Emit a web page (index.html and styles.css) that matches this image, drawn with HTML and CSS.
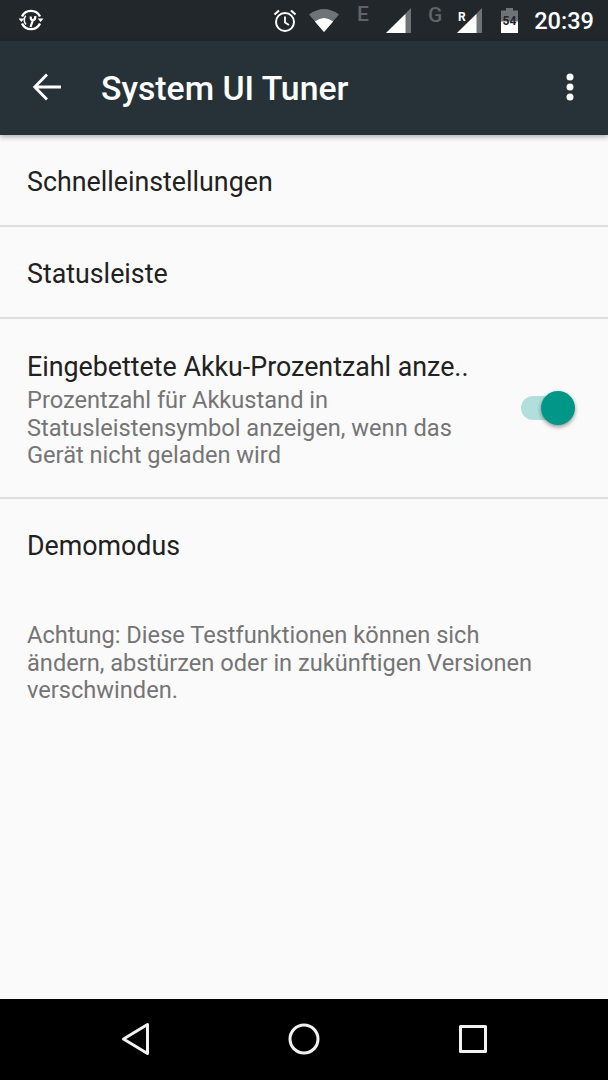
FILE: index.html
```html
<!DOCTYPE html>
<html lang="de">
<head>
<meta charset="utf-8">
<title>System UI Tuner</title>
<link rel="stylesheet" href="styles.css">
</head>
<body>
<div class="phone">
  <div class="statusbar">
    <svg class="ic-vital" width="26" height="26" viewBox="0 0 26 26" fill="none" stroke="#fff">
      <path d="M4 9.500A10 10 0 0 1 22 9.500M22 16.500A10 10 0 0 1 4 16.500" stroke-width="2.400"/>
      <path d="M0.500 11.500h5.800L3.400 15zM19.700 11.500h5.800L22.600 15z" fill="#fff" stroke="none"/>
      <path d="M7.800 8.800A6.500 6.500 0 0 0 8 17.500" stroke-width="1.500"/>
      <path d="M12.800 9.500C12.300 11.800 13.300 13 14.800 13.500C16.600 13 17.600 11.300 17.200 9M14.800 13.500L12.500 20" stroke-width="2.200"/>
    </svg>
    <div class="status-right">
      <svg class="ic-alarm" width="24" height="26" viewBox="0 0 24 26" fill="none" stroke="#fff">
        <circle cx="12" cy="14" r="9" stroke-width="2"/>
        <path d="M12 8.500V14.500L16 17" stroke-width="1.800"/>
        <path d="M1.500 6.500L6 2.500M22.500 6.500L18 2.500" stroke-width="2.200"/>
      </svg>
      <svg class="ic-wifi" width="30" height="24" viewBox="0 0 30 24">
        <path d="M0 6.500Q15 -4.500 30 6.500L15 24z" fill="#6f7375"/>
        <path d="M5.800 13.500Q15 6.500 24.200 13.500L15 24z" fill="#fff"/>
      </svg>
      <svg class="ic-net" width="14" height="26" viewBox="0 0 14 26"><text class="net-letter" x="0" y="20">E</text></svg>
      <svg class="ic-signal" width="26" height="26" viewBox="0 0 26 26">
        <path d="M25 0V25H0z" fill="#6f7375"/>
        <path d="M19.500 6V25H0z" fill="#fff"/>
      </svg>
      <svg class="ic-net2" width="16" height="26" viewBox="0 0 16 26"><text class="net-letter" x="0" y="21">G</text></svg>
      <svg class="ic-signal2" width="26" height="26" viewBox="0 0 26 26">
        <path d="M25 0V25H0z" fill="#6f7375"/>
        <path d="M19.500 6V25H0z" fill="#fff"/>
        <text class="roam" x="1" y="13">R</text>
      </svg>
      <svg class="ic-batt" width="18" height="26" viewBox="0 0 18 26">
        <path d="M5 0h7v2.500h5V25H0V2.500h5z" fill="#6f7375"/>
        <path d="M0 13.500H17V25H0z" fill="#fff"/>
        <text class="batt-level" x="8.500" y="17">54</text>
      </svg>
      <span class="clock">20:39</span>
    </div>
  </div>
  <header class="toolbar">
    <svg class="ic-back" width="28" height="28" viewBox="0 0 28 28" fill="none" stroke="#fff" stroke-width="2.800">
      <path d="M28 14H2M14 1.500L1.800 14L14 26.500"/>
    </svg>
    <h1 class="title">System UI Tuner</h1>
    <svg class="ic-more" width="10" height="28" viewBox="0 0 10 28" fill="#fff">
      <circle cx="5" cy="4" r="3.500"/><circle cx="5" cy="14" r="3.500"/><circle cx="5" cy="24" r="3.500"/>
    </svg>
  </header>
  <main class="content">
    <div class="row row-simple">Schnelleinstellungen</div>
    <div class="row row-simple">Statusleiste</div>
    <div class="row row-toggle">
      <div class="row-text">
        <div class="row-title">Eingebettete Akku-Prozentzahl anze..</div>
        <div class="row-sub">Prozentzahl für Akkustand in Statusleistensymbol anzeigen, wenn das Gerät nicht geladen wird</div>
      </div>
      <div class="switch"><span class="track"></span><span class="thumb"></span></div>
    </div>
    <div class="row row-simple row-last">Demomodus</div>
    <p class="note">Achtung: Diese Testfunktionen können sich ändern, abstürzen oder in zukünftigen Versionen verschwinden.</p>
  </main>
  <nav class="navbar">
    <svg width="30" height="34" viewBox="0 0 30 34" fill="none" stroke="#f2f2f2" stroke-width="3" stroke-linejoin="round">
      <path d="M26.500 2.500V31.500L2.500 17z"/>
    </svg>
    <svg class="nav-home" width="32" height="32" viewBox="0 0 32 32" fill="none" stroke="#f2f2f2" stroke-width="3">
      <circle cx="16" cy="16" r="14"/>
    </svg>
    <svg width="28" height="28" viewBox="0 0 28 28" fill="none" stroke="#f2f2f2" stroke-width="3" stroke-linejoin="round">
      <rect x="1.500" y="1.500" width="25" height="25"/>
    </svg>
  </nav>
</div>
</body>
</html>
```
FILE: styles.css
```css
* { box-sizing: border-box; }
html, body { margin: 0; padding: 0; }
body { background: #fafafa; font-family: Roboto, "Noto Sans", sans-serif; }
.phone { width: 608px; height: 1080px; display: flex; flex-direction: column; overflow: hidden; }

.statusbar { height: 41px; flex: none; background: #21272b; display: flex; align-items: flex-start; padding: 8px 14px 0 18px; justify-content: space-between; }
.statusbar svg { display: block; flex: none; }
.ic-vital { margin-top: -1px; }
.status-right { display: flex; align-items: flex-start; }
.ic-wifi { margin-left: 12px; }
.ic-net { margin-left: 18px; margin-top: -7px; }
.ic-signal { margin-left: 15px; }
.ic-net2 { margin-left: 16px; margin-top: -7px; }
.ic-signal2 { margin-left: 13px; }
.ic-batt { margin-left: 18px; }
.net-letter { font: 500 21px Roboto, sans-serif; fill: #5f6467; }
.roam { font: 700 12px Roboto, sans-serif; fill: #fff; }
.batt-level { font: 700 12px Roboto, sans-serif; fill: #21272b; text-anchor: middle; }
.clock { margin-left: 15px; color: #fff; font-size: 23.600px; font-weight: 500; line-height: 26px; }

.toolbar { height: 94px; flex: none; background: #263238; display: flex; align-items: center; padding: 0 33px; box-shadow: 0 2px 5px rgba(0,0,0,.3); position: relative; color: #fff; }
.ic-back { flex: none; margin-top: -2px; }
.title { margin: 2px 0 0 40px; flex: 1; font-size: 33.750px; font-weight: 500; line-height: 40px; white-space: nowrap; }
.ic-more { flex: none; margin-top: -2px; }

.content { flex: 1; background: #fafafa; }
.row { border-bottom: 2px solid #dedede; padding: 0 27px; }
.row-simple { height: 92px; display: flex; align-items: center; font-size: 26.800px; color: #212121; padding-top: 4px; }
.row-toggle { height: 180px; display: flex; align-items: flex-start; padding-top: 32px; }
.row-text { width: 460px; flex: none; }
.row-title { font-size: 26.800px; line-height: 33px; color: #212121; white-space: nowrap; }
.row-sub { font-size: 23.625px; line-height: 27.500px; color: #757575; margin-top: 3px; }
.switch { position: relative; width: 54px; height: 34px; margin: 40px 0 0 34px; flex: none; }
.track { position: absolute; left: 0; top: 5px; width: 42px; height: 24px; border-radius: 12px; background: #b2dfdb; }
.thumb { position: absolute; left: 20px; top: 0; width: 34px; height: 34px; border-radius: 50%; background: #009688; box-shadow: 0 2px 4px rgba(0,0,0,.4); }
.row-last { border-bottom: 0; padding-top: 2px; }
.note { margin: 0; padding: 31px 60px 0 27px; font-size: 23.625px; line-height: 27.500px; color: #757575; }

.navbar { height: 81px; flex: none; background: #000; display: flex; align-items: center; justify-content: space-between; padding: 0 121px 2px 121px; }
.navbar svg { display: block; flex: none; }
.nav-home { margin-right: 3px; }
```
